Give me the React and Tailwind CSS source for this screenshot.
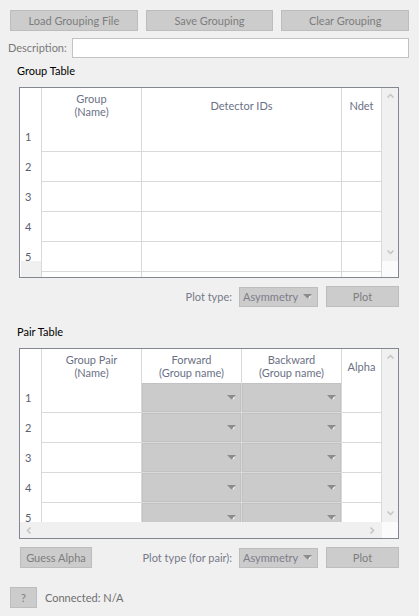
import React from "react";

function Caret({ dir = "down", color = "#c4c4c4" }) {
  const pts = {
    up: "0.5,4.5 3.5,1.5 6.5,4.5",
    down: "0.5,1.5 3.5,4.5 6.5,1.5",
    left: "4.5,0.5 1.5,3.5 4.5,6.5",
    right: "1.5,0.5 4.5,3.5 1.5,6.5",
  }[dir];
  return (
    <svg width="7" height="7" viewBox="0 0 7 7" className="block">
      <polyline points={pts} fill="none" stroke={color} strokeWidth="1.5" />
    </svg>
  );
}

function ComboArrow() {
  return (
    <svg width="9" height="5" viewBox="0 0 9 5" className="block shrink-0">
      <polygon points="0,0 9,0 4.5,4.5" fill="#8c8c8c" />
      <polygon points="6,3 7.5,1.5 7.5,3 6,4.5" fill="#ffffff" />
    </svg>
  );
}

function Btn({ children, className = "" }) {
  return (
    <div
      className={
        "h-[21px] bg-[#cccccc] border border-[#bdbdbd] text-[#7d7d7d] flex items-center justify-center " +
        className
      }
    >
      {children}
    </div>
  );
}

function Combo() {
  return (
    <div className="w-[79px] h-[20px] bg-[#cccccc] border border-[#bdbdbd] flex items-center justify-between pl-[3px] pr-[5px] text-[#7d7d8a]">
      <span className="whitespace-nowrap">Asymmetry</span>
      <ComboArrow />
    </div>
  );
}

function VScroll() {
  return (
    <div className="w-[16px] flex flex-col bg-[#f0f0f0]">
      <div className="h-[17px] flex items-center justify-center">
        <Caret dir="up" />
      </div>
      <div className="flex-1" />
      <div className="h-[17px] flex items-center justify-center">
        <Caret dir="down" />
      </div>
      <div className="h-[16px] bg-[#fbfbfb]" />
    </div>
  );
}

const hdr = "text-[#6b7185] leading-[13px] text-center";

function GroupTable() {
  const rows = [1, 2, 3, 4, 5];
  return (
    <div className="ml-[19px] w-[380px] h-[191px] border border-[#828790] bg-white flex relative overflow-hidden">
      <div className="w-[362px] flex flex-col overflow-hidden">
        <div className="h-[34px] flex shrink-0">
          <div className="w-[22px] border-r border-[#d9d9d9]" />
          <div className={"w-[100px] border-r border-[#d9d9d9] flex items-center justify-center " + hdr}>
            Group
            <br />
            (Name)
          </div>
          <div className={"w-[200px] border-r border-[#d9d9d9] flex items-center justify-center " + hdr}>
            Detector IDs
          </div>
          <div className={"w-[40px] border-r border-[#d9d9d9] flex items-center justify-center " + hdr}>
            Ndet
          </div>
        </div>
        {rows.map((r) => (
          <div key={r} className="h-[30px] flex shrink-0">
            <div className="w-[22px] border-r border-[#d9d9d9] flex items-center pl-[5px] text-[#5c6070]">
              {r}
            </div>
            <div className="w-[100px] border-r border-b border-[#d9d9d9]" />
            <div className="w-[200px] border-r border-b border-[#d9d9d9]" />
            <div className="w-[40px] border-r border-b border-[#d9d9d9]" />
          </div>
        ))}
        <div className="h-[10px] flex shrink-0">
          <div className="w-[22px] border-r border-[#d9d9d9]" />
          <div className="w-[100px] border-r border-[#d9d9d9]" />
          <div className="w-[200px] border-r border-[#d9d9d9]" />
          <div className="w-[40px] border-r border-[#d9d9d9]" />
        </div>
      </div>
      <VScroll />
      <div className="absolute left-[1px] bottom-0 w-[20px] h-[16px] bg-[#f0f0f0]" />
    </div>
  );
}

function ComboCell() {
  return (
    <div className="w-[100px] border-r border-b border-[#dadada] bg-[#cbcbcb] shadow-[inset_0_0_0_1px_#c2c2c2] flex items-center justify-end pr-[5px]">
      <ComboArrow />
    </div>
  );
}

function PairTable() {
  const rows = [1, 2, 3, 4, 5];
  return (
    <div className="ml-[19px] w-[380px] h-[191px] border border-[#828790] bg-white flex overflow-hidden">
      <div className="w-[362px] flex flex-col">
        <div className="flex-1 flex flex-col overflow-hidden">
          <div className="h-[34px] flex shrink-0">
            <div className="w-[22px] border-r border-[#d9d9d9]" />
            <div className={"w-[100px] border-r border-[#d9d9d9] flex items-center justify-center " + hdr}>
              Group Pair
              <br />
              (Name)
            </div>
            <div className={"w-[100px] border-r border-[#d9d9d9] flex items-center justify-center " + hdr}>
              Forward
              <br />
              (Group name)
            </div>
            <div className={"w-[100px] border-r border-[#d9d9d9] flex items-center justify-center " + hdr}>
              Backward
              <br />
              (Group name)
            </div>
            <div className={"w-[40px] border-r border-[#d9d9d9] flex items-center justify-center " + hdr}>
              Alpha
            </div>
          </div>
          {rows.map((r) => (
            <div key={r} className="h-[30px] flex shrink-0">
              <div className="w-[22px] border-r border-[#d9d9d9] flex items-center pl-[5px] text-[#5c6070]">
                {r}
              </div>
              <div className="w-[100px] border-r border-b border-[#d9d9d9]" />
              <ComboCell />
              <ComboCell />
              <div className="w-[40px] border-r border-b border-[#d9d9d9]" />
            </div>
          ))}
        </div>
        <div className="h-[16px] shrink-0 bg-[#f0f0f0] flex items-center justify-between px-[6px]">
          <Caret dir="left" />
          <Caret dir="right" />
        </div>
      </div>
      <VScroll />
    </div>
  );
}

export default function App() {
  return (
    <div className="w-[419px] h-[616px] bg-[#f0f0f0] font-['Lato',sans-serif] text-[11px] leading-[14px] overflow-hidden">
      <div className="pt-[10px] px-[10px] flex gap-[8px]">
        <Btn className="flex-1">Load Grouping File</Btn>
        <Btn className="flex-1">Save Grouping</Btn>
        <Btn className="flex-1">Clear Grouping</Btn>
      </div>
      <div className="mt-[7px] pl-[8px] pr-[10px] flex items-center">
        <div className="w-[64px] text-[#7a7a7a]">Description:</div>
        <div className="flex-1 h-[20px] bg-white border border-[#c3c3c3]" />
      </div>
      <div className="mt-[6px] pl-[17px] text-black">Group Table</div>
      <div className="mt-[9px]">
        <GroupTable />
      </div>
      <div className="mt-[8px] pr-[20px] flex items-center justify-end">
        <span className="text-[#767a8a] mr-[7px]">Plot type:</span>
        <Combo />
        <Btn className="w-[73px] h-[20px] ml-[8px]">Plot</Btn>
      </div>
      <div className="mt-[18px] pl-[17px] text-black">Pair Table</div>
      <div className="mt-[9px]">
        <PairTable />
      </div>
      <div className="mt-[8px] pl-[20px] pr-[20px] flex items-center">
        <Btn className="w-[72px] h-[20px]">Guess Alpha</Btn>
        <div className="flex-1" />
        <span className="text-[#767a8a] mr-[7px]">Plot type (for pair):</span>
        <Combo />
        <Btn className="w-[73px] h-[20px] ml-[8px]">Plot</Btn>
      </div>
      <div className="mt-[19px] pl-[10px] flex items-center">
        <Btn className="w-[27px] h-[20px]">?</Btn>
        <span className="ml-[8px] text-[#6f6f6f]">Connected: N/A</span>
      </div>
    </div>
  );
}
